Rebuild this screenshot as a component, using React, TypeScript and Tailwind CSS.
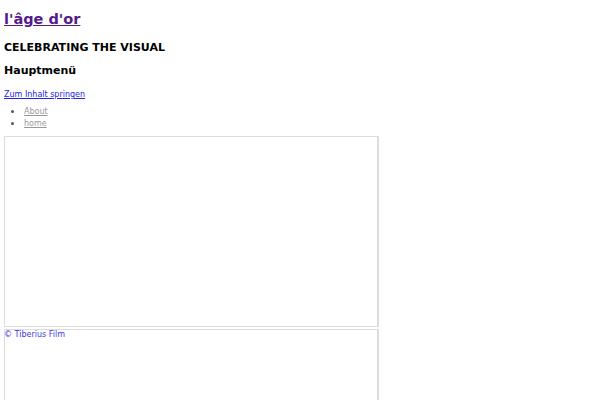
const font = { fontFamily: '"DejaVu Sans", sans-serif' };

export default function App() {
  return (
    <div className="min-h-[400px] overflow-hidden bg-white px-1 text-black" style={font}>
      <h1 className="pt-[11px] text-[14.5px] font-bold leading-[17px]">
        <a href="#" className="text-[#551a8b] underline">
          l'âge d'or
        </a>
      </h1>
      <h2 className="mt-[13px] text-[11px] font-bold leading-[13px]">CELEBRATING THE VISUAL</h2>
      <h3 className="mt-[10px] text-[11px] font-bold leading-[13px]">Hauptmenü</h3>
      <a href="#" className="mt-[13px] block text-[8px] leading-[10px] text-[#2323e8] underline">
        Zum Inhalt springen
      </a>
      <ul className="mt-[5px] list-disc pl-[20px] text-[8px] text-[#999] marker:text-[11px] marker:text-[#555]">
        <li className="h-[11.5px] leading-[11.5px]">
          <a href="#" className="underline">About</a>
        </li>
        <li className="h-[11.5px] leading-[11.5px]">
          <a href="#" className="underline">home</a>
        </li>
      </ul>
      <div className="mt-[7.5px] flex w-[375px] flex-col gap-[2px]">
        <div className="h-[191px] border border-r-2 border-[#dcdcdc]" />
        <div className="relative h-[120px] border border-r-2 border-[#dcdcdc]">
          <span className="absolute left-[-1px] top-0 text-[8px] leading-[10px] text-[#3b3be0]">
            © Tiberius Film
          </span>
        </div>
      </div>
    </div>
  );
}
